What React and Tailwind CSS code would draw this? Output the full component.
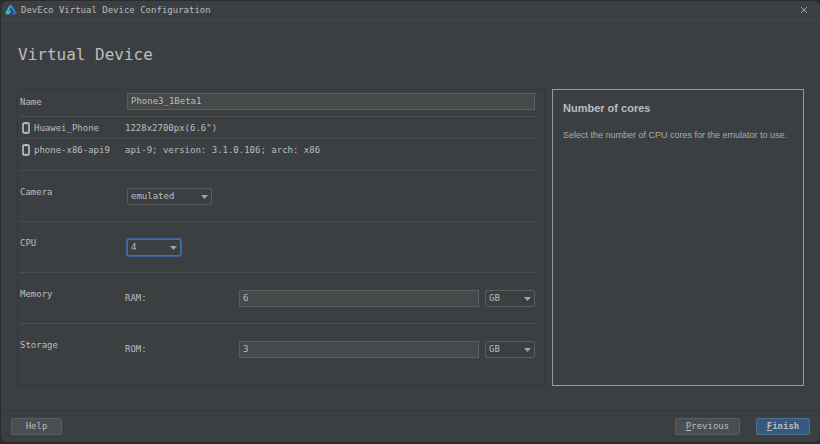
// App.jsx
// Virtual device configuration dialog

import { useState } from 'react';
import clsx from 'clsx';

const images = [
    { id: 'huawei', name: 'Huawei_Phone', detail: '1228x2700px(6.6")' },
    { id: 'x86', name: 'phone-x86-api9', detail: 'api-9; version: 3.1.0.106; arch: x86' },
];

function Logo() {
    return (
        <svg className="w-3 h-3 shrink-0" viewBox="0 0 12 12" aria-hidden="true">
            <path d="M5.4 2 L1.6 8.4 Q1.2 9.4 2.2 9.4 H3.6 L5 7.2" fill="none" stroke="#35b9dd" strokeWidth="2" strokeLinecap="round" strokeLinejoin="round" />
            <path d="M6 2 L9.8 8" fill="none" stroke="#2c86d6" strokeWidth="2.2" strokeLinecap="round" />
            <path d="M7.6 9.4 H9.6 Q10.8 9.4 10.2 8.4" fill="none" stroke="#3f63cf" strokeWidth="2" strokeLinecap="round" strokeLinejoin="round" />
        </svg>
    );
}

function PhoneIcon() {
    return (
        <svg className="w-2 h-3 shrink-0" viewBox="0 0 8 12" aria-hidden="true">
            <rect x="1" y="1" width="6" height="10" rx="1" fill="none" stroke="#d2d4d5" strokeWidth="1.4" />
            <path d="M3 1.8 H5" stroke="#d2d4d5" strokeWidth="1" />
            <path d="M3.4 9.4 H4.6" stroke="#b0b2b3" strokeWidth="0.8" />
        </svg>
    );
}

function Select({ id, label, value, onChange, options, className, focused }) {
    return (
        <div className={clsx('relative', className)}>
            <select
                id={id}
                aria-label={label}
                value={value}
                onChange={e => onChange(e.target.value)}
                className={clsx(
                    'block w-full h-[17px] appearance-none rounded-xs border bg-[#3c3f41] pl-[3px] pr-4 leading-[15px] outline-none',
                    focused ? 'border-[#41719f] ring-1 ring-[#3d6590]' : 'border-[#5a5d5f]'
                )}
            >
                {options.map(o => <option key={o}>{o}</option>)}
            </select>
            <svg className="absolute right-1 top-[7px] w-[7px] h-1 pointer-events-none" viewBox="0 0 7 4" aria-hidden="true">
                <path d="M0 0 H7 L3.5 4 Z" fill="#a2a5a7" />
            </svg>
        </div>
    );
}

function TextField({ className, ...props }) {
    return (
        <input
            type="text"
            className={clsx('block h-[17px] min-w-0 border border-[#5a5e60] bg-[#45494a] px-[3px] pb-px outline-none', className)}
            {...props}
        />
    );
}

function Section({ title, htmlFor, children }) {
    return (
        <div className="flex h-[51px] items-start border-t border-[#4c4f51] pt-[17px]">
            <label htmlFor={htmlFor} className="w-[105px] shrink-0 -mt-0.5">{title}</label>
            {children}
        </div>
    );
}

function SizeSection({ title, id, label, size, setSize, unit, setUnit }) {
    return (
        <Section title={title} htmlFor={id}>
            <label htmlFor={id} className="w-[114px] shrink-0 pt-0.5">{label}</label>
            <TextField id={id} className="flex-1" value={size} onChange={e => setSize(e.target.value)} />
            <Select
                label={`${title} unit`}
                className="w-[50px] ml-1.5 mr-0.5"
                value={unit}
                onChange={setUnit}
                options={['GB', 'MB']}
            />
        </Section>
    );
}

const buttonClass = 'h-[17px] rounded-xs border text-center leading-[15px]';

export default function App() {
    const [name, setName] = useState('Phone3_1Beta1');
    const [camera, setCamera] = useState('emulated');
    const [cores, setCores] = useState('4');
    const [ram, setRam] = useState('6');
    const [ramUnit, setRamUnit] = useState('GB');
    const [rom, setRom] = useState('3');
    const [romUnit, setRomUnit] = useState('GB');

    return (
        <div className="flex min-h-screen flex-col bg-[#2b2a2c] pl-px pt-px pb-0.5">
            <div className="flex flex-1 flex-col rounded-md bg-[#3c3f41] font-['DejaVu_Sans_Mono',monospace] text-[9px] leading-3 text-[#bbbdbf]">
                <header className="flex h-[19px] items-center gap-1 border-b border-[#484746] pl-1 pr-3">
                    <Logo />
                    <span className="flex-1">DevEco Virtual Device Configuration</span>
                    <button type="button" aria-label="Close">
                        <svg className="w-2 h-2" viewBox="0 0 8 8" aria-hidden="true">
                            <path d="M1 1 L7 7 M7 1 L1 7" stroke="#a0a3a5" strokeWidth="1" />
                        </svg>
                    </button>
                </header>

                <main className="flex flex-1 flex-col px-4 pb-6">
                    <h1 className="px-px pt-[25px] pb-6 text-[16px] leading-5">Virtual Device</h1>
                    <div className="flex flex-1 gap-[7px]">
                        <section className="flex-1 border border-[#343638] pl-0.5 pr-[7px]">
                            <div className="flex h-[26px] items-center pb-[3px]">
                                <label htmlFor="name" className="w-[107px] shrink-0">Name</label>
                                <TextField id="name" className="flex-1 mr-0.5" value={name} onChange={e => setName(e.target.value)} />
                            </div>
                            {images.map(image => (
                                <div key={image.id} className="flex h-[22px] items-center border-t border-[#4c4f51]">
                                    <div className="flex w-[105px] shrink-0 items-center gap-1 pl-0.5">
                                        <PhoneIcon />
                                        <span>{image.name}</span>
                                    </div>
                                    <span>{image.detail}</span>
                                </div>
                            ))}
                            <div className="h-[10px]" />
                            <Section title="Camera" htmlFor="camera">
                                <Select
                                    id="camera"
                                    className="w-[85px] ml-0.5"
                                    value={camera}
                                    onChange={setCamera}
                                    options={['emulated', 'none']}
                                />
                            </Section>
                            <Section title="CPU" htmlFor="cpu">
                                <Select
                                    id="cpu"
                                    focused
                                    className="w-[54px] ml-0.5"
                                    value={cores}
                                    onChange={setCores}
                                    options={['1', '2', '4', '8']}
                                />
                            </Section>
                            <SizeSection title="Memory" id="ram" label="RAM:" size={ram} setSize={setRam} unit={ramUnit} setUnit={setRamUnit} />
                            <SizeSection title="Storage" id="rom" label="ROM:" size={rom} setSize={setRom} unit={romUnit} setUnit={setRomUnit} />
                        </section>

                        <aside className="w-[252px] shrink-0 border border-[#999c9d] px-2.5 pt-3 font-['Liberation_Sans',sans-serif]">
                            <h2 className="text-[11px] leading-3 font-bold">Number of cores</h2>
                            <p className="mt-[15px] leading-3 text-[#a9abad]">Select the number of CPU cores for the emulator to use.</p>
                        </aside>
                    </div>
                </main>

                <footer className="flex h-8 items-center border-t border-[#353739] px-2.5">
                    <button type="button" className={clsx(buttonClass, 'w-[51px] border-[#5a5d5f] bg-[#4a4e50]')}>Help</button>
                    <button type="button" className={clsx(buttonClass, 'ml-auto w-[65px] border-[#5a5d5f] bg-[#4a4e50]')}>
                        <span className="underline">P</span>revious
                    </button>
                    <button type="button" className={clsx(buttonClass, 'ml-4 w-[54px] border-[#4c708c] bg-[#365880] font-bold')}>
                        <span className="underline">F</span>inish
                    </button>
                </footer>
            </div>
        </div>
    );
}
